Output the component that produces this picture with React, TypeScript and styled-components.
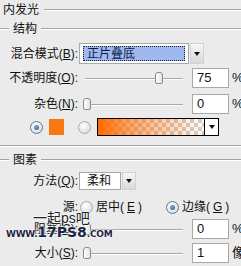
import React from "react";
import styled, { createGlobalStyle } from "styled-components";

const GlobalStyle = createGlobalStyle`
  html, body {
    margin: 0;
    padding: 0;
    background: #ebebeb;
  }
`;

const Page = styled.div`
  position: relative;
  width: 241px;
  height: 266px;
  overflow: hidden;
  padding-top: 3px;
  box-sizing: border-box;
  font-family: "Liberation Sans", "Noto Sans CJK SC", sans-serif;
  font-size: 12px;
  line-height: 14px;
  color: #111;
  background: #ebebeb;
`;

const Rule = styled.div`
  flex: 1;
  height: 0;
  border-top: 1px solid #a3a3a3;
  border-bottom: 1px solid #ffffff;
`;

const LeadRule = styled(Rule)`
  flex: none;
  width: 9px;
`;

const TitleRow = styled.div`
  display: flex;
  align-items: center;
  gap: 5px;
  height: 14px;
  padding-left: 3px;
`;

const GroupRow = styled.div<{ $mt: number }>`
  display: flex;
  align-items: center;
  gap: 4px;
  height: 14px;
  margin-top: ${(p) => p.$mt}px;
`;

const Row = styled.div<{ $mt: number; $h: number }>`
  display: flex;
  align-items: center;
  width: 260px;
  height: ${(p) => p.$h}px;
  margin-top: ${(p) => p.$mt}px;
  white-space: nowrap;
`;

const Separator = styled.div<{ $mt: number }>`
  margin-top: ${(p) => p.$mt}px;
  border-top: 1px solid #a3a3a3;
  border-bottom: 1px solid #ffffff;
`;

const Label = styled.div`
  flex: none;
  width: 79px;
  padding-right: 1px;
  box-sizing: border-box;
  text-align: right;
  white-space: nowrap;
`;

const SelectBox = styled.div<{ $w: number; $h: number; $focused?: boolean }>`
  flex: none;
  display: flex;
  align-items: stretch;
  width: ${(p) => p.$w}px;
  height: ${(p) => p.$h}px;
  padding: ${(p) => (p.$focused ? "2px 3px" : "1px 1px")};
  box-sizing: border-box;
  border: 1px solid #a9a9a9;
  background: #ffffff;
`;

const SelectValue = styled.div<{ $focused?: boolean }>`
  flex: 1;
  display: flex;
  align-items: center;
  padding-left: ${(p) => (p.$focused ? 3 : 5)}px;
  white-space: nowrap;
  color: ${(p) => (p.$focused ? "#0d1a4a" : "#111")};
  background: ${(p) => (p.$focused ? "#9fb9f0" : "transparent")};
  border: 1px ${(p) => (p.$focused ? "dotted #222" : "solid transparent")};
`;

const DropButton = styled.div<{ $h: number }>`
  flex: none;
  display: flex;
  align-items: center;
  justify-content: center;
  width: 14px;
  height: ${(p) => p.$h}px;
  margin-left: 1px;
  box-sizing: border-box;
  border: 1px solid #d2d2d2;
  background: linear-gradient(#f6f6f6, #d9d9d9);
`;

const Arrow = styled.div`
  width: 0;
  height: 0;
  border-left: 3px solid transparent;
  border-right: 3px solid transparent;
  border-top: 4px solid #111;
`;

const Slider = styled.div`
  position: relative;
  flex: none;
  width: 104px;
  height: 14px;
  margin-left: 3px;
`;

const Track = styled.div`
  position: absolute;
  left: 3px;
  right: 3px;
  top: 7px;
  height: 0;
  border-top: 1px solid #a8a8a8;
  border-bottom: 1px solid #ffffff;
`;

const Thumb = styled.div`
  position: absolute;
  top: 1px;
  width: 6px;
  height: 10px;
  border: 1px solid #8a8a8a;
  border-radius: 3px 3px 2px 2px;
  background: linear-gradient(90deg, #ffffff, #e2e2e2);
`;

const NumInput = styled.div<{ $h: number }>`
  flex: none;
  display: flex;
  align-items: center;
  width: 37px;
  height: ${(p) => p.$h}px;
  margin-left: 6px;
  padding-left: 4px;
  box-sizing: border-box;
  border: 1px solid #a9a9a9;
  background: #ffffff;
  font-size: 13px;
`;

const Unit = styled.div`
  flex: none;
  margin-left: 3px;
  font-size: 13px;
`;

const ColorRow = styled.div`
  display: flex;
  align-items: center;
  height: 18px;
  margin-top: 4px;
  padding-left: 30px;
`;

const Radio = styled.div<{ $on?: boolean }>`
  flex: none;
  position: relative;
  width: 11px;
  height: 11px;
  border-radius: 50%;
  border: 1px solid ${(p) => (p.$on ? "#5d7690" : "#a8a8a8")};
  background: radial-gradient(circle at 40% 35%, #ffffff, #d6d6d6);
  &::after {
    content: "";
    display: ${(p) => (p.$on ? "block" : "none")};
    position: absolute;
    left: 3px;
    top: 3px;
    width: 5px;
    height: 5px;
    border-radius: 50%;
    background: radial-gradient(circle at 40% 35%, #7fb0de, #1f4f86);
  }
`;

const Swatch = styled.div`
  flex: none;
  width: 15px;
  height: 16px;
  margin-left: 6px;
  background: #f97614;
`;

const GradientBox = styled.div`
  flex: none;
  display: flex;
  width: 122px;
  height: 18px;
  margin-left: 6px;
  box-sizing: border-box;
  border: 1px solid #000;
  background: #fff;
`;

const GradientFill = styled.div`
  flex: 1;
  background:
    linear-gradient(90deg, #ff6a00 0%, rgba(255, 106, 0, 0.6) 30%, rgba(255, 106, 0, 0) 100%),
    repeating-conic-gradient(#cfcfcf 0% 25%, #ffffff 0% 50%) 0 0 / 8px 8px;
`;

const GradientDrop = styled.div`
  flex: none;
  display: flex;
  align-items: center;
  justify-content: center;
  width: 13px;
  border-left: 1px solid #000;
  background: #fff;
`;

const RadioGroup = styled.div<{ $ml: number }>`
  flex: none;
  display: flex;
  align-items: center;
  gap: 3px;
  margin-left: ${(p) => p.$ml}px;
`;

const Watermark = styled.div`
  position: absolute;
  left: 6px;
  top: 211px;
  pointer-events: none;
  color: #1d2742;
  text-shadow: 0 0 2px #fff, 0 0 2px #fff, 0 0 1px #fff;
`;

const WatermarkTitle = styled.div`
  margin-left: 27px;
  font-size: 14px;
  line-height: 15px;
  color: #222;
`;

const WatermarkUrl = styled.div`
  display: flex;
  align-items: baseline;
  font-family: "DejaVu Sans", sans-serif;
  font-weight: bold;
  line-height: 13px;
  font-size: 9px;
  letter-spacing: -0.3px;
  span {
    font-size: 14px;
    letter-spacing: 0;
  }
`;

function ComboSelect(props: { w: number; h: number; value: string; focused?: boolean }) {
  return (
    <>
      <SelectBox $w={props.w} $h={props.h} $focused={props.focused}>
        <SelectValue $focused={props.focused}>{props.value}</SelectValue>
      </SelectBox>
      <DropButton $h={props.h}>
        <Arrow />
      </DropButton>
    </>
  );
}

function SliderField(props: { pos: number; value: string; unit: string; h: number }) {
  return (
    <>
      <Slider>
        <Track />
        <Thumb style={{ left: props.pos }} />
      </Slider>
      <NumInput $h={props.h}>{props.value}</NumInput>
      <Unit>{props.unit}</Unit>
    </>
  );
}

export default function App() {
  return (
    <Page>
      <GlobalStyle />
      <TitleRow>
        内发光
        <Rule />
      </TitleRow>

      <GroupRow $mt={5}>
        <LeadRule />
        结构
        <Rule />
      </GroupRow>

      <Row $mt={7} $h={21}>
        <Label>
          混合模式(<u>B</u>):
        </Label>
        <ComboSelect w={110} h={21} value="正片叠底" focused />
      </Row>

      <Row $mt={4} $h={20}>
        <Label>
          不透明度(<u>O</u>):
        </Label>
        <SliderField pos={73} value="75" unit="%" h={20} />
      </Row>

      <Row $mt={6} $h={20}>
        <Label>
          杂色(<u>N</u>):
        </Label>
        <SliderField pos={1} value="0" unit="%" h={20} />
      </Row>

      <ColorRow>
        <Radio $on />
        <Swatch />
        <Radio style={{ marginLeft: 14 }} />
        <GradientBox>
          <GradientFill />
          <GradientDrop>
            <Arrow />
          </GradientDrop>
        </GradientBox>
      </ColorRow>

      <Separator $mt={9} />

      <GroupRow $mt={6}>
        <LeadRule />
        图素
        <Rule />
      </GroupRow>

      <Row $mt={5} $h={18}>
        <Label>
          方法(<u>Q</u>):
        </Label>
        <ComboSelect w={42} h={18} value="柔和" />
      </Row>

      <Row $mt={10} $h={14}>
        <Label>源:</Label>
        <RadioGroup $ml={1}>
          <Radio />
          居中(<u>E</u>)
        </RadioGroup>
        <RadioGroup $ml={24}>
          <Radio $on />
          边缘(<u>G</u>)
        </RadioGroup>
      </Row>

      <Row $mt={5} $h={20}>
        <Label>
          阻塞(<u>C</u>):
        </Label>
        <SliderField pos={1} value="0" unit="%" h={20} />
      </Row>

      <Row $mt={4} $h={20}>
        <Label>
          大小(<u>S</u>):
        </Label>
        <SliderField pos={1} value="1" unit="像素" h={20} />
      </Row>

      <Watermark>
        <WatermarkTitle>一起ps吧</WatermarkTitle>
        <WatermarkUrl>
          WWW.<span>17PS8</span>.COM
        </WatermarkUrl>
      </Watermark>
    </Page>
  );
}
